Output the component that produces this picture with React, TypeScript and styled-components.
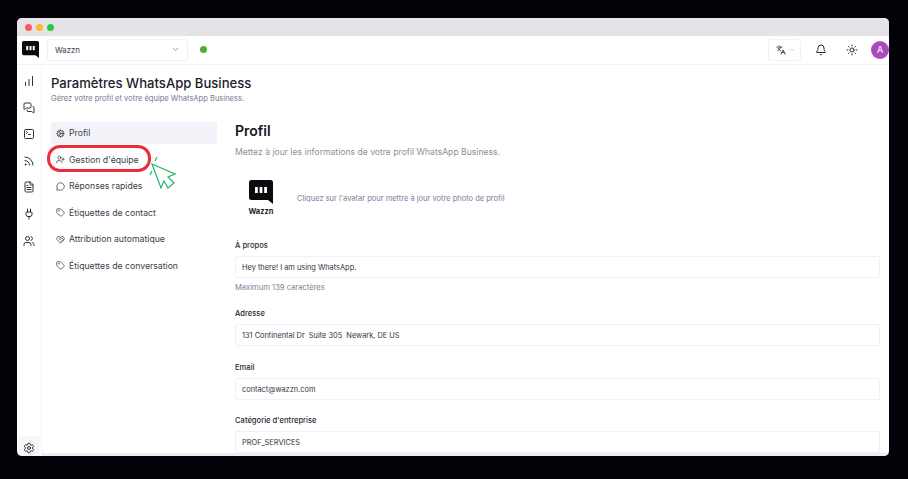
import React from 'react'
import styled, { createGlobalStyle } from 'styled-components'
import {
  Bell,
  ChartNoAxesColumnIncreasing,
  ChevronDown,
  Cog,
  FileText,
  HeartHandshake,
  Languages,
  MessageCircle,
  MessagesSquare,
  Plug,
  Rss,
  Settings,
  SquareTerminal,
  Sun,
  Tag,
  UserPlus,
  Users,
} from 'lucide-react'

const GlobalStyle = createGlobalStyle`
  html, body {
    margin: 0;
    height: 479px;
    overflow: hidden;
    background: #020208;
    font-family: Inter, "Liberation Sans", sans-serif;
  }
  * { box-sizing: border-box; }
`

const Page = styled.div`
  width: 908px;
  height: 479px;
  padding: 18px 19px 23px 17px;
`

const Window = styled.div`
  position: relative;
  height: 438px;
  display: flex;
  flex-direction: column;
  overflow: hidden;
  background: #fff;
  border-radius: 5px;
`

const TitleBar = styled.div`
  height: 18px;
  flex-shrink: 0;
  display: flex;
  align-items: center;
  gap: 4px;
  padding-left: 8px;
  background: #e5e3e6;
`

const Light = styled.span<{ $color: string }>`
  width: 7px;
  height: 7px;
  border-radius: 50%;
  background: ${(p) => p.$color};
`

const TopBar = styled.div`
  height: 29px;
  flex-shrink: 0;
  display: flex;
  align-items: center;
  padding: 0 0 1px 5px;
  border-bottom: 1px solid #f3f3f8;
`

const LogoMark = styled.svg`
  display: block;
  flex-shrink: 0;
`

const AccountSelect = styled.div`
  width: 141px;
  height: 22px;
  margin-left: 8px;
  padding: 0 7px;
  display: flex;
  align-items: center;
  justify-content: space-between;
  border: 1px solid #f0f0f6;
  border-radius: 3px;
  font-size: 7.8px;
  color: #3a3a48;
`

const StatusDot = styled.span`
  width: 7px;
  height: 7px;
  margin-left: 12px;
  border-radius: 50%;
  background: #4fae32;
`

const TopActions = styled.div`
  margin-left: auto;
  display: flex;
  align-items: center;
`

const LangButton = styled.div`
  width: 33px;
  height: 22px;
  padding-left: 7px;
  display: flex;
  align-items: center;
  gap: 3px;
  border: 1px solid #f1f1f7;
  border-radius: 3px;
  color: #2a2a36;
`

const IconSlot = styled.span<{ $ml: number }>`
  display: flex;
  margin-left: ${(p) => p.$ml}px;
  color: #2a2a36;
`

const Avatar = styled.span`
  width: 18px;
  height: 18px;
  margin-left: 13px;
  display: flex;
  align-items: center;
  justify-content: center;
  border-radius: 50%;
  background: #a94bbd;
  color: #fff;
  font-size: 9px;
`

const Body = styled.div`
  flex: 1;
  min-height: 0;
  display: flex;
`

const Rail = styled.nav`
  width: 25px;
  flex-shrink: 0;
  padding-top: 10px;
  display: flex;
  flex-direction: column;
  align-items: center;
  gap: 14.6px;
  border-right: 1px solid #f3f3f8;
  color: #30303c;
`

const RailBottom = styled.div`
  width: 22px;
  height: 20px;
  margin-top: auto;
  padding-top: 3px;
  display: flex;
  align-items: center;
  justify-content: center;
  border-radius: 4px 4px 0 0;
  background: #f7f7fa;
`

const Main = styled.main`
  flex: 1;
  min-width: 0;
  padding: 10px 9px 0 9px;
  overflow: hidden;
  border-bottom: 3px solid #eeecef;
`

const PageTitle = styled.h1`
  margin: 0;
  font-size: 13.1px;
  line-height: 16px;
  font-weight: 500;
  color: #1c1c2b;
`

const PageSub = styled.p`
  margin: 2px 0 0;
  font-size: 7.55px;
  line-height: 12px;
  color: #70788e;
`

const Columns = styled.div`
  display: flex;
  margin-top: 17px;
`

const SideNav = styled.div`
  width: 166px;
  flex-shrink: 0;
  margin-right: 18px;
  display: flex;
  flex-direction: column;
  gap: 4.6px;
`

const NavItem = styled.div<{ $active?: boolean }>`
  height: 22px;
  padding-left: 5px;
  display: flex;
  align-items: center;
  gap: 4px;
  border-radius: 2px;
  background: ${(p) => (p.$active ? '#f2f3f9' : 'transparent')};
  font-size: 8.7px;
  color: #3d3d4c;
`

const Panel = styled.section`
  flex: 1;
  min-width: 0;
`

const PanelTitle = styled.h2`
  margin: 0;
  font-size: 14px;
  line-height: 18px;
  font-weight: 600;
  color: #16161f;
`

const PanelSub = styled.p`
  margin: 6px 0 0;
  font-size: 8.6px;
  line-height: 12px;
  color: #8f8d98;
`

const AvatarRow = styled.div`
  margin-top: 22px;
  display: flex;
  align-items: center;
`

const BrandBlock = styled.div`
  width: 52px;
  display: flex;
  flex-direction: column;
  align-items: center;
  gap: 3px;
`

const BrandName = styled.span`
  font-size: 7.5px;
  line-height: 9px;
  font-weight: 700;
  color: #1d1d26;
`

const AvatarHint = styled.span`
  margin: 0 0 0 10px;
  font-size: 7.5px;
  color: #76809a;
`

const Field = styled.div<{ $mt: number }>`
  margin-top: ${(p) => p.$mt}px;
`

const Label = styled.div`
  font-size: 7.6px;
  line-height: 10px;
  font-weight: 500;
  color: #2a2a34;
`

const Input = styled.div`
  height: 22px;
  margin-top: 5px;
  padding: 0 6px;
  display: flex;
  align-items: center;
  border: 1px solid #f0f0f6;
  border-radius: 2px;
  font-size: 7.4px;
  white-space: pre;
  color: #33333f;
`

const Hint = styled.div`
  margin-top: 5px;
  font-size: 7.6px;
  line-height: 10px;
  color: #7d8296;
`

const Highlight = styled.div`
  position: absolute;
  left: 30px;
  top: 127px;
  width: 104px;
  height: 27px;
  border: 3px solid #ee2b3b;
  border-radius: 13px;
`

const Pointer = styled.svg`
  position: absolute;
  left: 128px;
  top: 132px;
`

const Logo = ({ size }: { size: number }) => (
  <LogoMark width={size} height={size} viewBox="0 0 24 24">
    <path d="M2.5 0h19A2.5 2.5 0 0 1 24 2.5V24l-5-4H2.5A2.5 2.5 0 0 1 0 17.5v-15A2.5 2.5 0 0 1 2.5 0z" fill="#0b0b0f" />
    <rect x="6" y="7" width="2.8" height="6" fill="#fff" />
    <rect x="10.6" y="7" width="2.8" height="6" fill="#fff" />
    <rect x="15.2" y="7" width="2.8" height="6" fill="#fff" />
  </LogoMark>
)

const navItems = [
  { icon: Cog, label: 'Profil', active: true },
  { icon: UserPlus, label: "Gestion d'équipe" },
  { icon: MessageCircle, label: 'Réponses rapides' },
  { icon: Tag, label: 'Étiquettes de contact' },
  { icon: HeartHandshake, label: 'Attribution automatique' },
  { icon: Tag, label: 'Étiquettes de conversation' },
]

const railIcons = [ChartNoAxesColumnIncreasing, MessagesSquare, SquareTerminal, Rss, FileText, Plug, Users]

export default function App() {
  return (
    <Page>
      <GlobalStyle />
      <Window>
        <TitleBar>
          <Light $color="#fb5b57" />
          <Light $color="#fdb82e" />
          <Light $color="#27c840" />
        </TitleBar>
        <TopBar>
          <Logo size={17} />
          <AccountSelect>
            Wazzn
            <ChevronDown size={9} color="#70707c" />
          </AccountSelect>
          <StatusDot />
          <TopActions>
            <LangButton>
              <Languages size={10} />
              <ChevronDown size={6} color="#a0a0aa" />
            </LangButton>
            <IconSlot $ml={14}>
              <Bell size={12} />
            </IconSlot>
            <IconSlot $ml={19}>
              <Sun size={12} />
            </IconSlot>
            <Avatar>A</Avatar>
          </TopActions>
        </TopBar>
        <Body>
          <Rail>
            {railIcons.map((Icon, i) => (
              <Icon key={i} size={12} />
            ))}
            <RailBottom>
              <Settings size={12} />
            </RailBottom>
          </Rail>
          <Main>
            <PageTitle>Paramètres WhatsApp Business</PageTitle>
            <PageSub>Gérez votre profil et votre équipe WhatsApp Business.</PageSub>
            <Columns>
              <SideNav>
                {navItems.map(({ icon: Icon, label, active }) => (
                  <NavItem key={label} $active={active}>
                    <Icon size={9} />
                    {label}
                  </NavItem>
                ))}
              </SideNav>
              <Panel>
                <PanelTitle>Profil</PanelTitle>
                <PanelSub>Mettez à jour les informations de votre profil WhatsApp Business.</PanelSub>
                <AvatarRow>
                  <BrandBlock>
                    <Logo size={24} />
                    <BrandName>Wazzn</BrandName>
                  </BrandBlock>
                  <AvatarHint>Cliquez sur l'avatar pour mettre à jour votre photo de profil</AvatarHint>
                </AvatarRow>
                <Field $mt={25}>
                  <Label>À propos</Label>
                  <Input>Hey there! I am using WhatsApp.</Input>
                  <Hint>Maximum 139 caractères</Hint>
                </Field>
                <Field $mt={16}>
                  <Label>Adresse</Label>
                  <Input>131 Continental Dr  Suite 305  Newark, DE US</Input>
                </Field>
                <Field $mt={17}>
                  <Label>Email</Label>
                  <Input>contact@wazzn.com</Input>
                </Field>
                <Field $mt={16}>
                  <Label>Catégorie d'entreprise</Label>
                  <Input>PROF_SERVICES</Input>
                </Field>
              </Panel>
            </Columns>
          </Main>
        </Body>
        <Highlight />
        <Pointer width="34" height="42" viewBox="0 0 34 42" fill="none" stroke="#1fb866" strokeWidth="1.2">
          <path d="M7 14 L30 24 L23 27 L29 33 L23 38 L19 31 L16 38 Z" fill="#fff" />
          <path d="M10 11 L12 7 M5 25 L7 21 M3 13 L5 13" />
        </Pointer>
      </Window>
    </Page>
  )
}
